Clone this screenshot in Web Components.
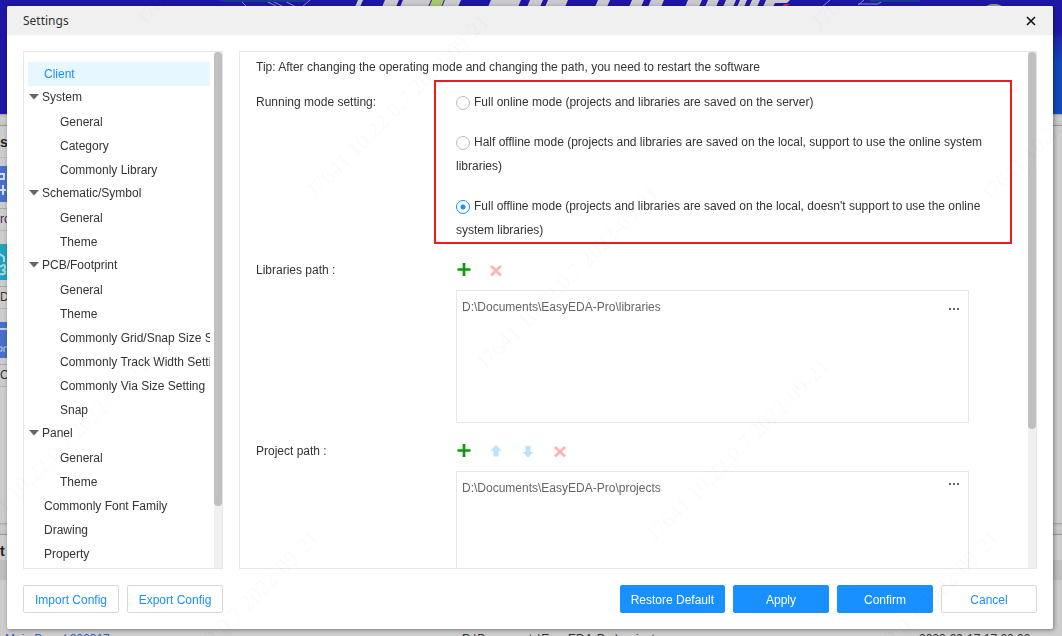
<!DOCTYPE html>
<html lang="en">
<head>
<meta charset="utf-8">
<title>Settings</title>
<style>
  html, body { margin: 0; height: 100%; overflow: hidden; }
  body { font: 12px/24px "Liberation Sans", Arial, sans-serif; color: #333; background: #ccc; }
</style>
</head>
<body>
<start-page></start-page>
<settings-dialog heading="Settings">
  <settings-tree slot="nav"></settings-tree>
  <scroll-panel slot="content" style="--thumb:73%">
    <client-settings></client-settings>
  </scroll-panel>
  <push-button slot="start">Import Config</push-button>
  <push-button slot="start">Export Config</push-button>
  <push-button slot="end" primary>Restore Default</push-button>
  <push-button slot="end" primary>Apply</push-button>
  <push-button slot="end" primary>Confirm</push-button>
  <push-button slot="end">Cancel</push-button>
</settings-dialog>
<water-mark></water-mark>

<script>
class Base extends HTMLElement {
  mount(html) {
    this.attachShadow({ mode: 'open' }).innerHTML = '<style>*{box-sizing:border-box}</style>' + html;
  }
}

/* Dimmed application page that lies under the dialog */
customElements.define('start-page', class extends Base {
  constructor() {
    super();
    this.mount(`
<style>
  :host { display: flex; flex-direction: column; height: 100vh; overflow: hidden; background: #ccc; }
  .banner { height: 114px; flex: none; background: linear-gradient(90deg, #1e17a6 0 90%, transparent 90%), linear-gradient(#1e17a6 28%, #1d2cae 36%, #1348b8 55%); }
  .banner svg { display: block; width: 1062px; height: 8px; }
  .edge { height: 12px; flex: none; background: linear-gradient(#bbb, #ccc 30%, #c4c4c4); border-top: 1px solid #aaa; border-bottom: 1px solid #999; }
  .tiles { flex: 1; min-height: 0; overflow: hidden; width: 140px; }
  .cap { font-weight: bold; font-size: 14px; color: #222; height: 32px; line-height: 32px; border-bottom: 1px solid #bbb; margin-bottom: 8px; }
  .tile { width: 140px; height: 36px; background: #4a6fca; display: block; }
  .tile.teal { background: #21a4bb; }
  .name { border-top: 1px solid #aaa; border-bottom: 1px solid #b4b4b4; margin: 6px 0 13px; height: 23px; line-height: 20px; color: #333; }
  .name.visited { color: #4b2060; }
  .recent { height: 25px; line-height: 32px; font-weight: bold; font-size: 14px; color: #222; }
  .head { height: 20px; background: #bdbdbd; }
  .gap { height: 46px; }
  .row { display: grid; grid-template-columns: 457px 1fr 143px; height: 10px; padding-left: 5px; line-height: 26px; }
  a { color: #1a66c8; text-decoration: none; }
</style>
<div class="banner"><svg viewBox="0 0 1062 8" aria-hidden="true">
  <g fill="none" stroke="#8f8fc6" stroke-width="1"><path d="M240 0l7 7M264 0l14 7M270 0l14 7M283 0l13 7M310 0l-8 7M830 0l-8 7M858 5l6-5M858 4h20l6-4"/></g>
  <path fill="#173a90" d="M218 0h90l-3 2h-80zM870 0h50v2h-50z"/>
  <path fill="#c9c9cf" d="M358 0h5l-3 7h-5zM385 0h14l-3 7h-14zM403 0h28l-3 7h-28zM445 0h16l-3 7h-16zM491 0h30l-3 7h-30zM530 0h13l-3 7h-13zM548 0h20l-3 7h-20zM598 0h12l-3 7h-12zM632 0h12l-3 7h-12zM651 0h13l-3 7h-13zM688 0h14l-3 7h-14zM708 0h11l-3 7h-11zM726 0h10l-3 7h-10zM740 0h7l-3 7h-7zM752 0h8l-3 7h-8zM766 0h24l-3 3h-12l-2 4h-10z"/>
  <path fill="#a9c86c" d="M432 0h12l-3 7h-12z"/><ellipse cx="994" cy="8" rx="9" ry="4" fill="#8fae8f"/>
  <path fill="#b9305e" d="M784 4h6l-4 3h-4z"/>
</svg></div>
<div class="edge"></div>
<div class="tiles">
  <div class="cap">s</div>
  <svg class="tile" viewBox="0 0 140 36" aria-hidden="true"><path fill="none" stroke="#d5dcf0" stroke-width="2" d="M0 8h4v5H0M0 24h6M3 19v10"/></svg>
  <div class="name visited">ro</div>
  <svg class="tile teal" viewBox="0 0 140 36" aria-hidden="true"><path fill="none" stroke="#a8d8e4" stroke-width="2" d="M0 10l4 3v5M0 23q5-4 5 0t-3 3q4 1 3 3t-5 1"/></svg>
  <div class="name">D</div>
  <svg class="tile" viewBox="0 0 140 36" aria-hidden="true"><path stroke="#c5cde0" stroke-width="2" d="M0 7h8"/><path fill="none" stroke="#c5cde0" d="M0 25h2v4H0M4 30v-5h3"/></svg>
  <div class="name">C</div>
</div>
<div class="edge"></div>
<div class="recent">t</div>
<div class="head"></div>
<div class="gap"></div>
<div class="row"><a href="#board">Main Board 220917</a><span>D:\\Documents\\EasyEDA-Pro\\projects</span><span>2022-09-17 17:20:02</span></div>`);
  }
});

customElements.define('settings-dialog', class extends Base {
  connectedCallback() {
    this.mount(`
<style>
  :host { position: fixed; inset: 6px 9px 7px 7px; display: flex; flex-direction: column; background: #fff; border-radius: 2px; box-shadow: 1px 1px 4px rgba(0,0,0,.4); }
  header { display: flex; align-items: center; justify-content: space-between; height: 29px; padding: 0 16px; background: #f0f0f0; flex: none; border-radius: 2px 2px 0 0; }
  h1 { margin: 0; font: 12px/30px "Noto Sans", sans-serif; color: #333; }
  .close { border: 0; padding: 0; background: none; width: 12px; height: 12px; display: flex; }
  main { flex: 1; min-height: 0; display: grid; grid-template-columns: 200px minmax(0, 1fr); grid-template-rows: minmax(0, 1fr); gap: 16px; padding: 16px 16px 0; }
  footer { display: flex; justify-content: space-between; padding: 16px; }
  footer div { display: flex; gap: 8px; }
</style>
<header><h1>${this.getAttribute('heading')}</h1>
<button class="close" aria-label="Close"><svg width="12" height="12" viewBox="0 0 12 12"><path d="M2 2l8 8M10 2l-8 8" stroke="#111" stroke-width="1.600"/></svg></button></header>
<main><slot name="nav"></slot><slot name="content"></slot></main>
<footer><div><slot name="start"></slot></div><div><slot name="end"></slot></div></footer>`);
  }
});

customElements.define('push-button', class extends Base {
  constructor() {
    super();
    this.mount(`
<style>
  :host { display: block; }
  button { display: block; min-width: 96px; height: 28px; padding: 2px 10px 0; border: 1px solid #d9d9d9; border-radius: 2px; background: #fff; color: #1890ff; font: inherit; line-height: 24px; }
  :host([primary]) button { background: #1890ff; border-color: #1890ff; color: #fff; }
</style><button type="button"><slot></slot></button>`);
  }
});

/* Bordered viewport with a slim scroll track */
customElements.define('scroll-panel', class extends Base {
  constructor() {
    super();
    this.mount(`
<style>
  :host { display: flex; border: 1px solid #e6e6e6; overflow: hidden; min-height: 0; }
  .view { flex: 1; min-width: 0; overflow: hidden; }
  .track { flex: none; width: 8px; background: #f0f0f0; }
  .thumb { height: var(--thumb); background: #c0c0c0; border-radius: 4px; }
</style><div class="view"><slot></slot></div><div class="track"><div class="thumb"></div></div>`);
  }
});

const TREE = [
  ['Client'],
  ['System', ['General', 'Category', 'Commonly Library']],
  ['Schematic/Symbol', ['General', 'Theme']],
  ['PCB/Footprint', ['General', 'Theme', 'Commonly Grid/Snap Size Setting', 'Commonly Track Width Setting', 'Commonly Via Size Setting', 'Snap']],
  ['Panel', ['General', 'Theme']],
  ['Commonly Font Family'], ['Drawing'], ['Property']
];
customElements.define('settings-tree', class extends Base {
  constructor() {
    super();
    const items = TREE.map(([name, kids], i) => kids
      ? `<li><div class="group"><svg width="10" height="6" viewBox="0 0 10 6" aria-hidden="true"><path d="M0 0h10L5 5.500z" fill="#666"/></svg>${name}</div><ul>${kids.map(k => `<li class="leaf">${k}</li>`).join('')}</ul></li>`
      : `<li class="leaf${i ? '' : ' active'}">${name}</li>`).join('');
    this.mount(`
<style>
  :host { display: grid; min-height: 0; }
  ul { list-style: none; margin: 0; padding: 0; }
  .root { padding: 10px 4px 0; }
  .leaf { height: 24px; padding-left: 16px; white-space: nowrap; overflow: hidden; }
  ul ul .leaf { padding-left: 32px; }
  .active { background: #e6f7ff; color: #1890ff; }
  .group { display: flex; align-items: center; gap: 3px; height: 24px; line-height: 22px; padding: 0 0 2px 1px; white-space: nowrap; }
</style>
<scroll-panel style="--thumb:88%"><ul class="root">${items}</ul></scroll-panel>`);
  }
});

customElements.define('client-settings', class extends Base {
  constructor() {
    super();
    this.mount(`
<style>
  :host { display: block; padding: 3px 16px 0; }
  p { margin: 0 0 1px; }
</style>
<p>Tip: After changing the operating mode and changing the path, you need to restart the software</p>
<running-mode></running-mode>
<path-list label="Libraries path :" path="D:\\Documents\\EasyEDA-Pro\\libraries" low></path-list>
<path-list label="Project path :" path="D:\\Documents\\EasyEDA-Pro\\projects" sortable></path-list>`);
  }
});

const MODES = [
  'Full online mode (projects and libraries are saved on the server)',
  'Half offline mode (projects and libraries are saved on the local, support to use the online system libraries)',
  "Full offline mode (projects and libraries are saved on the local, doesn't support to use the online system libraries)"
];
customElements.define('running-mode', class extends Base {
  constructor() {
    super();
    this.mount(`
<style>
  :host { display: grid; grid-template-columns: 178px minmax(0, 578px); margin-bottom: 14px; }
  .title { padding-top: 10px; }
  .modes { display: grid; gap: 16px; border: 2px solid #ed1c24; padding: 8px 20px 0; }
  label { display: block; height: min-content; }
  input { appearance: none; width: 14px; height: 14px; margin: 0 4px 0 0; vertical-align: -4px; border: 1px solid #bbb; border-radius: 50%; background: #fff; }
  input:checked { border-color: #1890ff; background: radial-gradient(circle, #1890ff 2px, #fff 3px); }
</style>
<div class="title" id="t">Running mode setting:</div>
<div class="modes" role="radiogroup" aria-labelledby="t">
${MODES.map((m, i) => `<label for="m${i}"><input type="radio" name="mode" id="m${i}"${i === 2 ? ' checked' : ''}>${m}</label>`).join('')}
</div>`);
  }
});

const ICONS = {
  Add: '<path d="M8 1v13M1.500 7.500h13" stroke="#0a9b0a" stroke-width="2.700"/>',
  Up: '<path d="M8 2l5.500 6H10.500v5.500h-5V8H2.500z" fill="#bfe0ff"/>',
  Down: '<path d="M8 14.500L2.500 9h3V3h5v6h3z" fill="#bfe0ff"/>',
  Remove: '<path d="M3 4l10 9.500M13 4l-10 9.500" stroke="#ffb3b3" stroke-width="2.800"/>'
};
customElements.define('path-list', class extends Base {
  connectedCallback() {
    const tools = this.hasAttribute('sortable') ? ['Add', 'Up', 'Down', 'Remove'] : ['Add', 'Remove'];
    this.mount(`
<style>
  :host { display: grid; grid-template-columns: 200px minmax(0, 513px); margin-bottom: 16px; }
  .tools { display: flex; align-items: center; gap: 16px; height: 24px; margin-bottom: 8px; }
  button { border: 0; padding: 0; background: none; width: 16px; height: 16px; display: flex; align-items: center; }
  .box { height: 133px; border: 1px solid #e6e6e6; padding: 4px 5px; }
  .item { display: flex; align-items: flex-start; height: 24px; }
  :host([low]) .item { align-items: flex-end; }
  .item button { height: 18px; }
  input { flex: 1; min-width: 0; height: 24px; border: 0; padding: 0; background: none; font: inherit; color: #666; outline: 0; }
</style>
<label for="p">${this.getAttribute('label')}</label>
<div>
  <div class="tools">${tools.map(t => `<button type="button" aria-label="${t}"><svg width="16" height="16" viewBox="0 0 16 16">${ICONS[t]}</svg></button>`).join('')}</div>
  <div class="box"><div class="item"><input id="p" type="text" value="${this.getAttribute('path')}">
  <button type="button" aria-label="Browse"><svg width="16" height="4" viewBox="0 0 16 4"><path d="M2 0h2v2H2zM6 0h2v2H6zM10 0h2v2h-2z" fill="#666"/></svg></button></div></div>
</div>`);
  }
});

/* Faint diagonal stamp repeated over the whole window */
customElements.define('water-mark', class extends Base {
  constructor() {
    super();
    const spots = [[145, 27], [315, 199], [485, 371], [655, 543], [825, 715], [820, 31], [990, 203], [-25, 543], [145, 715]];
    this.mount(`
<style>
  :host { position: fixed; inset: 0; pointer-events: none; overflow: hidden; }
  svg { display: block; width: 100%; height: 100%; }
  text { font: 22px "Liberation Serif", serif; fill: #000; fill-opacity: .02; }
</style>
<svg aria-hidden="true">${spots.map(([x, y]) => `<text transform="translate(${x} ${y}) rotate(-45)">J7641 10.22.0.7 2022-09-21</text>`).join('')}</svg>`);
  }
});
</script>
</body>
</html>
